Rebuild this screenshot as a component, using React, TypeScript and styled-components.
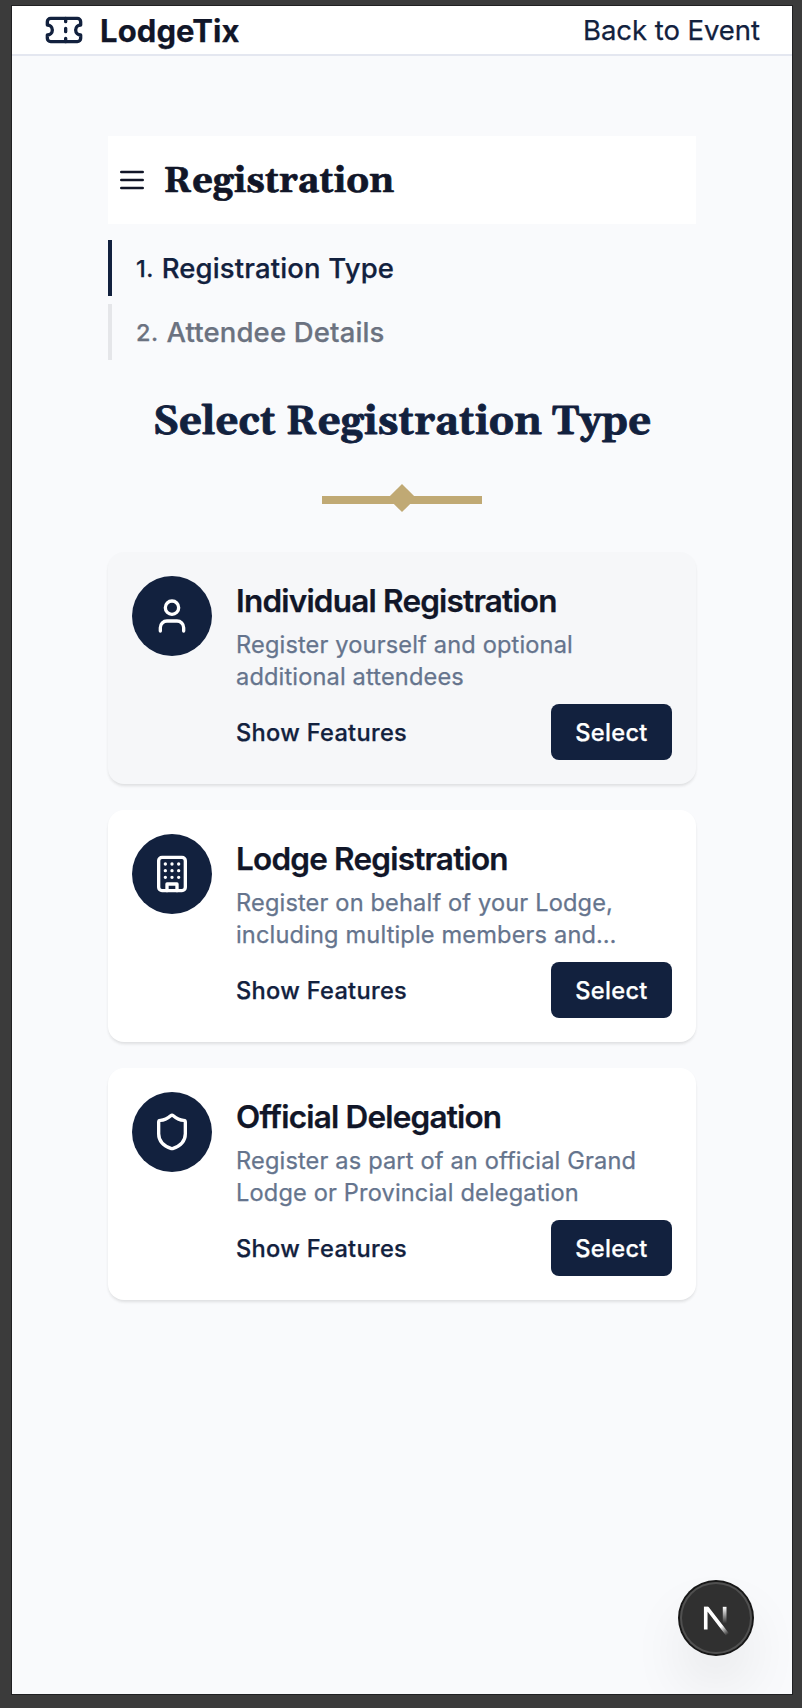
import React from "react";
import styled, { createGlobalStyle } from "styled-components";

const navy = "#12213e";
const ink = "#111628";
const gold = "#c0a974";
const sans = `Inter, "Liberation Sans", sans-serif`;
const serif = `Gelasio, Georgia, "Liberation Serif", serif`;

const GlobalStyle = createGlobalStyle`
  *, *::before, *::after { box-sizing: border-box; }
  body {
    margin: 0;
    background: #3b3b3b;
    font-family: ${sans};
    -webkit-text-stroke: 0.25px currentColor;
  }
  h1, h2, h3, p, ol { margin: 0; padding: 0; }
  button { font: inherit; border: 0; padding: 0; background: none; cursor: pointer; }
`;

const Desk = styled.div`
  height: 1708px;
  padding: 5px 9px 13px 11px;
`;

const Screen = styled.div`
  position: relative;
  display: flex;
  flex-direction: column;
  height: 1690px;
  border: 1px solid #202022;
  background: #f9fafc;
  overflow: hidden;
`;

const Header = styled.header`
  display: flex;
  flex: none;
  align-items: center;
  justify-content: space-between;
  height: 50px;
  padding: 0 32px;
  border-bottom: 2px solid #e4e7f0;
  background: #fff;
`;

const Brand = styled.div`
  display: flex;
  align-items: center;
  gap: 16px;
  color: ${navy};
`;

const BrandName = styled.span`
  padding-top: 1px;
  color: ${ink};
  font-size: 31px;
  font-weight: 700;
  letter-spacing: 0.1px;
  line-height: 48px;
`;

const BackLink = styled.a`
  color: ${navy};
  font-size: 27.5px;
  letter-spacing: -0.05px;
  line-height: 40px;
`;

const Main = styled.main`
  display: flex;
  flex-direction: column;
  padding: 80px 96px 0;
`;

const TitleBar = styled.div`
  display: flex;
  align-items: center;
  gap: 15.5px;
  height: 88px;
  padding: 0 8px;
  background: #fff;
  color: ${ink};
`;

const PageTitle = styled.h1`
  padding-top: 3px;
  font-family: ${serif};
  font-size: 36px;
  font-weight: 700;
  line-height: 56px;
  -webkit-text-stroke-width: 0.7px;
`;

const Steps = styled.ol`
  display: flex;
  flex-direction: column;
  gap: 8px;
  margin-top: 16px;
  list-style: none;
`;

const Step = styled.li<{ $active?: boolean }>`
  display: flex;
  align-items: center;
  gap: 8px;
  height: 56px;
  padding-left: 24px;
  border-left: 4px solid ${(p) => (p.$active ? navy : "#e5e6e9")};
  color: ${(p) => (p.$active ? navy : "#6b7280")};
  font-size: 27.5px;
  font-weight: 500;
  letter-spacing: 0.15px;
`;

const StepNumber = styled.span`
  font-size: 23.5px;
  letter-spacing: 0.4px;
`;

const SectionTitle = styled.h2`
  margin-top: 34.5px;
  color: ${navy};
  font-family: ${serif};
  font-size: 40px;
  font-weight: 700;
  line-height: 56px;
  text-align: center;
  -webkit-text-stroke-width: 0.8px;
`;

const Divider = styled.svg`
  display: block;
  align-self: center;
  margin: 29.5px 0 36px;
`;

const Cards = styled.section`
  display: flex;
  flex-direction: column;
  gap: 26px;
`;

const Card = styled.article<{ $muted?: boolean }>`
  display: flex;
  gap: 24px;
  height: 232px;
  padding: 24px;
  border-radius: 16px;
  background: ${(p) => (p.$muted ? "#f6f7f9" : "#fff")};
  box-shadow: 0 2px 3px rgba(0, 0, 0, 0.06), 0 3px 4px -2px rgba(0, 0, 0, 0.08);
`;

const IconDisc = styled.div`
  display: flex;
  flex: none;
  align-items: center;
  justify-content: center;
  width: 80px;
  height: 80px;
  border-radius: 50%;
  background: ${navy};
  color: #fff;
`;

const CardBody = styled.div`
  display: flex;
  flex: 1;
  flex-direction: column;
`;

const CardTitle = styled.h3`
  margin-top: 1px;
  color: ${ink};
  font-size: 31.5px;
  font-weight: 600;
  letter-spacing: -0.8px;
  line-height: 48px;
`;

const Description = styled.p`
  margin-top: 4px;
  color: #65748d;
  font-size: 23.6px;
  letter-spacing: 0.15px;
  line-height: 32px;
  white-space: pre-line;
`;

const Actions = styled.div`
  display: flex;
  align-items: center;
  justify-content: space-between;
  margin-top: 11px;
  font-size: 23.6px;
  font-weight: 500;
`;

const FeaturesButton = styled.button`
  color: ${navy};
  letter-spacing: 0.3px;
`;

const SelectButton = styled.button`
  && {
    width: 121px;
    height: 56px;
    border-radius: 8px;
    background: ${navy};
    color: #fff;
    letter-spacing: 0.3px;
  }
`;

const DevBadge = styled.button`
  position: absolute;
  right: 40px;
  bottom: 40px;
  width: 72px;
  height: 72px;

  && {
    border-radius: 50%;
    background: #303030;
    box-shadow: 0 0 0 2px #171717, inset 0 0 0 2px #505050,
      0 32px 64px -16px rgba(0, 0, 0, 0.24);
  }

  svg { display: block; }
`;

type IconProps = { size: number; children: React.ReactNode };

const Icon = ({ size, children }: IconProps) => (
  <svg width={size} height={size} viewBox="0 0 24 24" fill="none" stroke="currentColor"
    strokeWidth={2} strokeLinecap="round" strokeLinejoin="round">
    {children}
  </svg>
);

const TicketIcon = () => (
  <Icon size={40}>
    <path d="M2 9a3 3 0 0 1 0 6v2a2 2 0 0 0 2 2h16a2 2 0 0 0 2-2v-2a3 3 0 0 1 0-6V7a2 2 0 0 0-2-2H4a2 2 0 0 0-2 2Z" />
    <path d="M13 5v2M13 17v2M13 11v2" />
  </Icon>
);

const MenuIcon = () => (
  <Icon size={32}>
    <path d="M4 12h16M4 6h16M4 18h16" />
  </Icon>
);

const UserIcon = () => (
  <Icon size={40}>
    <path d="M19 21v-2a4 4 0 0 0-4-4H9a4 4 0 0 0-4 4v2" />
    <circle cx="12" cy="7" r="4" />
  </Icon>
);

const BuildingIcon = () => (
  <Icon size={40}>
    <rect width="16" height="20" x="4" y="2" rx="2" ry="2" />
    <path d="M9 22v-4h6v4" />
    <path d="M8 6h.01M16 6h.01M12 6h.01M12 10h.01M12 14h.01M16 10h.01M16 14h.01M8 10h.01M8 14h.01" />
  </Icon>
);

const ShieldIcon = () => (
  <Icon size={40}>
    <path d="M20 13c0 5-3.5 7.5-7.66 8.95a1 1 0 0 1-.67-.01C7.5 20.5 4 18 4 13V6a1 1 0 0 1 1-1c2 0 4.5-1.2 6.24-2.72a1.17 1.17 0 0 1 1.52 0C14.51 3.81 17 5 19 5a1 1 0 0 1 1 1z" />
  </Icon>
);

const NextMark = () => (
  <svg width="72" height="72" viewBox="0 0 36 36" fill="none">
    <defs>
      <linearGradient id="slash" gradientUnits="userSpaceOnUse" x1="9.956" y1="11.123" x2="15.478" y2="17.967">
        <stop stopColor="#fff" />
        <stop offset="0.604" stopColor="#fff" stopOpacity="0" />
        <stop offset="1" stopColor="#fff" stopOpacity="0" />
      </linearGradient>
      <linearGradient id="stem" gradientUnits="userSpaceOnUse" x1="11.822" y1="1.4" x2="11.791" y2="9.625">
        <stop stopColor="#fff" />
        <stop offset="1" stopColor="#fff" stopOpacity="0" />
      </linearGradient>
      <clipPath id="edge">
        <path d="M1.3 1.2h14v15h-14z" />
      </clipPath>
    </defs>
    <g transform="translate(10.5 11.1)" strokeWidth="1.86" clipPath="url(#edge)">
      <path d="M13.3 15.2 2.34 1v11.6" stroke="url(#slash)" />
      <path d="M11.825 1.2v11.6" stroke="url(#stem)" />
    </g>
  </svg>
);

const options = [
  {
    title: "Individual Registration",
    text: "Register yourself and optional\nadditional attendees",
    icon: <UserIcon />,
    muted: true,
  },
  {
    title: "Lodge Registration",
    text: "Register on behalf of your Lodge,\nincluding multiple members and…",
    icon: <BuildingIcon />,
  },
  {
    title: "Official Delegation",
    text: "Register as part of an official Grand\nLodge or Provincial delegation",
    icon: <ShieldIcon />,
  },
];

export default function App() {
  return (
    <Desk>
      <GlobalStyle />
      <Screen>
        <Header>
          <Brand>
            <TicketIcon />
            <BrandName>LodgeTix</BrandName>
          </Brand>
          <BackLink>Back to Event</BackLink>
        </Header>
        <Main>
          <TitleBar>
            <MenuIcon />
            <PageTitle>Registration</PageTitle>
          </TitleBar>
          <Steps>
            <Step $active>
              <StepNumber>1.</StepNumber>
              Registration Type
            </Step>
            <Step>
              <StepNumber>2.</StepNumber>
              Attendee Details
            </Step>
          </Steps>
          <SectionTitle>Select Registration Type</SectionTitle>
          <Divider width="160" height="36" viewBox="0 0 160 36" fill={gold}>
            <path d="M0 16h160v8H0z" />
            <path d="M80 3.9 94.1 18 80 32.1 65.9 18z" />
          </Divider>
          <Cards>
            {options.map((o) => (
              <Card key={o.title} $muted={o.muted}>
                <IconDisc>{o.icon}</IconDisc>
                <CardBody>
                  <CardTitle>{o.title}</CardTitle>
                  <Description>{o.text}</Description>
                  <Actions>
                    <FeaturesButton>Show Features</FeaturesButton>
                    <SelectButton>Select</SelectButton>
                  </Actions>
                </CardBody>
              </Card>
            ))}
          </Cards>
        </Main>
        <DevBadge aria-label="Open developer tools">
          <NextMark />
        </DevBadge>
      </Screen>
    </Desk>
  );
}
